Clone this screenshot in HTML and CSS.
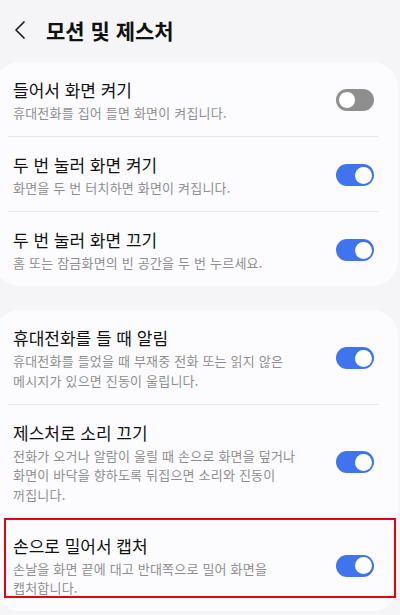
FILE: index.html
```html
<!DOCTYPE html>
<html lang="ko">
<head>
    <meta charset="UTF-8">
    <meta name="viewport" content="width=device-width, initial-scale=1.0">
    <title>모션 및 제스처</title>
    <link rel="stylesheet" href="styles.css">
</head>
<body>
    <div class="header">
        <svg class="back" width="14" height="20" viewBox="0 0 14 20">
            <path d="M11 2 L3 10 L11 18" fill="none" stroke="#1c1c1c" stroke-width="1.7" stroke-linecap="round" stroke-linejoin="round"/>
        </svg>
        <h1>모션 및 제스처</h1>
    </div>

    <!-- Screen wake gestures -->
    <div class="card">
        <div class="row">
            <div class="text">
                <div class="title">들어서 화면 켜기</div>
                <div class="sub">휴대전화를 집어 들면 화면이 켜집니다.</div>
            </div>
            <span class="switch off"></span>
        </div>
        <hr class="divider">
        <div class="row">
            <div class="text">
                <div class="title">두 번 눌러 화면 켜기</div>
                <div class="sub">화면을 두 번 터치하면 화면이 켜집니다.</div>
            </div>
            <span class="switch"></span>
        </div>
        <hr class="divider">
        <div class="row">
            <div class="text">
                <div class="title">두 번 눌러 화면 끄기</div>
                <div class="sub">홈 또는 잠금화면의 빈 공간을 두 번 누르세요.</div>
            </div>
            <span class="switch"></span>
        </div>
    </div>

    <!-- Other gestures -->
    <div class="card">
        <div class="row">
            <div class="text">
                <div class="title">휴대전화를 들 때 알림</div>
                <div class="sub">휴대전화를 들었을 때 부재중 전화 또는 읽지 않은 메시지가 있으면 진동이 울립니다.</div>
            </div>
            <span class="switch"></span>
        </div>
        <hr class="divider">
        <div class="row">
            <div class="text">
                <div class="title">제스처로 소리 끄기</div>
                <div class="sub">전화가 오거나 알람이 울릴 때 손으로 화면을 덮거나 화면이 바닥을 향하도록 뒤집으면 소리와 진동이 꺼집니다.</div>
            </div>
            <span class="switch"></span>
        </div>
        <div class="row marked">
            <div class="text">
                <div class="title">손으로 밀어서 캡처</div>
                <div class="sub">손날을 화면 끝에 대고 반대쪽으로 밀어 화면을 캡처합니다.</div>
            </div>
            <span class="switch"></span>
        </div>
    </div>
</body>
</html>
```

FILE: styles.css
```css
body {
    margin: 0;
    background: #f5f5f7;
    font-family: "Noto Sans CJK KR", sans-serif;
    color: #111;
    overflow: hidden;
    word-break: keep-all;
}
.header {
    height: 60px;
    display: flex;
    align-items: center;
    padding-left: 13px;
}
.back {
    margin-right: 19px;
}
.header h1 {
    margin: 0;
    font-size: 21px;
    font-weight: 700;
    line-height: 28px;
}
.card {
    background: #fcfcfe;
    border-radius: 26px;
    margin: 2px 2px 24px -6px;
}
.row {
    display: flex;
    align-items: center;
    padding: 16px 24px 13.5px 19px;
}
.text {
    flex: 1;
    padding-right: 36px;
}
.title {
    font-size: 17px;
    line-height: 24px;
    margin-bottom: 1px;
}
.sub {
    font-size: 13px;
    line-height: 19.5px;
    letter-spacing: 0.2px;
    color: #8e8e8e;
}
.divider {
    border: none;
    border-top: 1px solid #e6e6e8;
    margin: 0 20px 0 14px;
}
.switch {
    position: relative;
    flex: none;
    width: 38px;
    height: 22px;
    border-radius: 11px;
    background: #3f74ee;
}
.switch::after {
    content: "";
    position: absolute;
    top: 2.5px;
    right: 2.5px;
    width: 17px;
    height: 17px;
    border-radius: 50%;
    background: #fff;
}
.switch.off {
    background: #8e8e8e;
}
.switch.off::after {
    right: auto;
    left: 2px;
    top: 2px;
    width: 16px;
    height: 16px;
    border: 1px solid #8e8e8e;
    background: #fff;
}
.marked {
    position: relative;
}
.marked::after {
    content: "";
    position: absolute;
    top: 0;
    left: 10px;
    right: 2px;
    bottom: 13px;
    border: 2px solid #e8000b;
}
```
